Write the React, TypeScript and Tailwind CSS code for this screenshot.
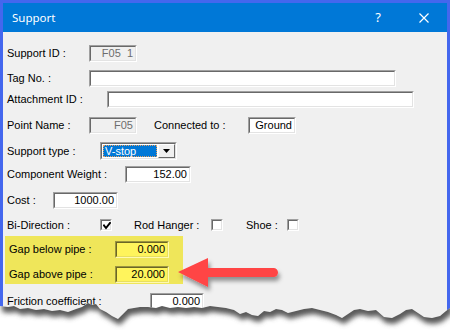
import clsx from "clsx";

const TEXT = "font-['Liberation_Sans',Arial,sans-serif] text-[11px] text-black";

function Field({ value = "", className, disabled, yellow }: { value?: string; className: string; disabled?: boolean; yellow?: boolean }) {
  return (
    <div
      className={clsx(
        "h-[17px] shrink-0 border",
        yellow ? "border-t-[#9a9440] border-l-[#9a9440] border-r-[#fff9b0] border-b-[#fff9b0]" : "border-t-[#a0a0a0] border-l-[#a0a0a0] border-r-white border-b-white",
        className,
      )}
    >
      <div
        className={clsx(
          "flex h-full items-center justify-end border pr-[2px] leading-none",
          yellow
            ? "border-t-[#6b6624] border-l-[#6b6624] border-r-[#e8df60] border-b-[#e8df60] bg-[#fff45c]"
            : "border-t-[#696969] border-l-[#696969] border-r-[#e3e3e3] border-b-[#e3e3e3]",
          disabled ? "bg-[#f0f0f0] text-[#6d6d6d]" : !yellow && "bg-white",
        )}
      >
        {value}
      </div>
    </div>
  );
}

function Check({ checked }: { checked?: boolean }) {
  return (
    <div className="h-[12px] w-[12px] shrink-0 border border-t-[#a0a0a0] border-l-[#a0a0a0] border-r-white border-b-white">
      <div className="h-full w-full border border-t-[#696969] border-l-[#696969] border-r-[#e3e3e3] border-b-[#e3e3e3] bg-white">
        {checked ? (
          <svg width="8" height="8" viewBox="0 0 8 8" className="ml-[1px] mt-[1px]">
            <path d="M1 3.5 L3 6 L7 1" fill="none" stroke="#000" strokeWidth="2" strokeLinecap="square" />
          </svg>
        ) : null}
      </div>
    </div>
  );
}

function Row({ label, labelW, children, className }: { label: string; labelW: string; children?: React.ReactNode; className?: string }) {
  return (
    <div className={clsx("flex items-center pl-[4px]", className)}>
      <span className={clsx("shrink-0 whitespace-nowrap leading-none", labelW)}>{label}</span>
      {children}
    </div>
  );
}

const EDGE: [number, number][] = [
  [0, 306], [8, 307], [14, 306], [20, 309], [28, 308], [36, 310], [44, 309], [52, 311], [60, 310], [68, 312],
  [76, 309], [82, 307], [88, 303], [92, 305], [96, 304], [100, 309], [106, 312], [112, 316], [118, 319], [122, 315],
  [128, 309], [134, 308], [140, 307], [148, 307], [156, 308], [162, 306], [170, 308], [178, 307], [186, 308], [194, 307],
  [202, 308], [210, 306], [218, 307], [226, 308], [234, 310], [240, 314], [246, 312], [252, 315], [258, 316], [264, 311],
  [270, 312], [276, 309], [282, 310], [288, 313], [296, 311], [304, 309], [312, 308], [320, 310], [328, 312], [336, 315],
  [342, 318], [348, 314], [354, 310], [360, 309], [368, 311], [376, 310], [384, 317], [392, 318], [400, 314], [406, 310],
  [412, 309], [418, 313], [424, 317], [432, 318], [440, 316], [446, 311], [450, 308],
];

function TornEdge() {
  const top = 285;
  const line = EDGE.map(([x, y]) => `${x},${y - top}`).join(" L");
  const below = `M${line} L450,60 L0,60 Z`;
  const above = `M${line} L450,-20 L0,-20 Z`;
  return (
    <svg className="absolute left-0 top-[285px]" width="450" height="48" viewBox="0 0 450 48">
      <defs>
        <clipPath id="below">
          <path d={below} />
        </clipPath>
        <filter id="blur" x="-10%" y="-50%" width="120%" height="200%">
          <feGaussianBlur stdDeviation="2.5" />
        </filter>
      </defs>
      <g clipPath="url(#below)">
        <rect x="0" y="0" width="450" height="48" fill="#fff" />
        <path d={above} transform="translate(2,6)" fill="#5a5a5a" filter="url(#blur)" />
      </g>
    </svg>
  );
}

function Arrow() {
  return (
    <svg className="absolute left-[170px] top-[250px]" width="124" height="50" viewBox="0 0 124 50">
      <defs>
        <filter id="shadow" x="-20%" y="-40%" width="140%" height="180%">
          <feDropShadow dx="2" dy="4" stdDeviation="2" floodColor="#000" floodOpacity="0.4" />
        </filter>
      </defs>
      <path
        d="M8,22 L38,8 L38,18 L103.5,18 A4.5,4.5 0 0 1 103.5,27 L38,27 L38,37 Z"
        fill="#ff4444"
        filter="url(#shadow)"
      />
    </svg>
  );
}

export default function App() {
  return (
    <div className={clsx("relative h-[333px] w-[450px] overflow-hidden bg-white", TEXT)}>
      <div className="flex h-[333px] flex-col border-x-[3px] border-t-[3px] border-[#4467ee]">
        <div className="flex h-[29px] shrink-0 items-center bg-[#0078d7] pl-[9px] pr-[18px] text-white">
          <span className="font-['Noto_Sans',sans-serif] text-[11.5px]">Support</span>
          <span className="ml-auto mr-[38px] font-['Noto_Sans',sans-serif] text-[13px] leading-none">?</span>
          <svg width="10" height="10" viewBox="0 0 10 10">
            <path d="M0.5 0.5 L9.5 9.5 M9.5 0.5 L0.5 9.5" stroke="#fff" strokeWidth="1.2" />
          </svg>
        </div>

        <div className="flex-1 bg-[#f0f0f0] pt-[13px]">
          <Row label="Support ID :" labelW="w-[82px]">
            <Field value={"F05\u00a0\u00a01"} disabled className="w-[48px]" />
          </Row>
          <Row label="Tag No. :" labelW="w-[82px]" className="mt-[8px]">
            <Field className="w-[307px]" />
          </Row>
          <Row label="Attachment ID :" labelW="w-[100px]" className="mt-[4px]">
            <Field className="w-[307px]" />
          </Row>
          <Row label="Point Name :" labelW="w-[82px]" className="mt-[9px]">
            <Field value="F05" disabled className="w-[48px]" />
            <span className="ml-[17px] w-[94px] shrink-0 leading-none">Connected to :</span>
            <Field value="Ground" className="w-[48px]" />
          </Row>
          <Row label="Support type :" labelW="w-[93px]" className="mt-[8px]">
            <div className="h-[18px] w-[77px] border border-t-[#a0a0a0] border-l-[#a0a0a0] border-r-white border-b-white">
              <div className="flex h-full border border-t-[#696969] border-l-[#696969] border-r-[#e3e3e3] border-b-[#e3e3e3] bg-white">
                <div className="m-[1px] flex w-[55px] items-center border border-dotted border-[#e8a060] bg-[#0078d7] pl-[1px] leading-none text-white">
                  V-stop
                </div>
                <div className="flex w-[17px] items-center justify-center border border-t-white border-l-white border-r-[#696969] border-b-[#696969] bg-[#f0f0f0]">
                  <svg width="7" height="4" viewBox="0 0 7 4">
                    <path d="M0 0 H7 L3.5 4 Z" fill="#000" />
                  </svg>
                </div>
              </div>
            </div>
          </Row>
          <Row label="Component Weight :" labelW="w-[118px]" className="mt-[6px]">
            <Field value="152.00" className="w-[66px]" />
          </Row>
          <Row label="Cost :" labelW="w-[46px]" className="mt-[9px]">
            <Field value="1000.00" className="w-[65px]" />
          </Row>
          <Row label="Bi-Direction :" labelW="w-[93px]" className="mt-[10px]">
            <Check checked />
            <span className="ml-[22px] w-[77px] shrink-0 leading-none">Rod Hanger :</span>
            <Check />
            <span className="ml-[23px] w-[41px] shrink-0 leading-none">Shoe :</span>
            <Check />
          </Row>

          <div className="ml-[2px] mt-[5px] w-[178px] bg-[#efe65a] pb-[1px] pt-[5px]">
            <Row label="Gap below pipe :" labelW="w-[106px]" className="pl-[2px]">
              <Field value="0.000" yellow className="w-[54px]" />
            </Row>
            <Row label="Gap above pipe :" labelW="w-[106px]" className="mt-[8px] pl-[2px]">
              <Field value="20.000" yellow className="w-[54px]" />
            </Row>
          </div>

          <Row label="Friction coefficient :" labelW="w-[143px]" className="mt-[9px]">
            <Field value="0.000" className="w-[54px]" />
          </Row>
        </div>
      </div>
      <Arrow />
      <TornEdge />
    </div>
  );
}
